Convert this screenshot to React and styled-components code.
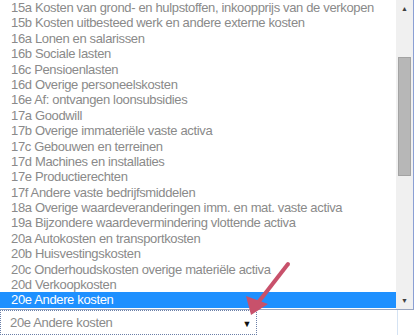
import React from "react";
import styled, { createGlobalStyle } from "styled-components";

const GlobalStyle = createGlobalStyle`
  html, body {
    margin: 0;
    padding: 0;
    background: #ffffff;
    font-family: "Liberation Sans", Arial, sans-serif;
  }
`;

const items = [
  "15a Kosten van grond- en hulpstoffen, inkoopprijs van de verkopen",
  "15b Kosten uitbesteed werk en andere externe kosten",
  "16a Lonen en salarissen",
  "16b Sociale lasten",
  "16c Pensioenlasten",
  "16d Overige personeelskosten",
  "16e Af: ontvangen loonsubsidies",
  "17a Goodwill",
  "17b Overige immateriële vaste activa",
  "17c Gebouwen en terreinen",
  "17d Machines en installaties",
  "17e Productierechten",
  "17f Andere vaste bedrijfsmiddelen",
  "18a Overige waardeveranderingen imm. en mat. vaste activa",
  "19a Bijzondere waardevermindering vlottende activa",
  "20a Autokosten en transportkosten",
  "20b Huisvestingskosten",
  "20c Onderhoudskosten overige materiële activa",
  "20d Verkoopkosten",
  "20e Andere kosten",
];

const Page = styled.div`
  width: 415px;
  height: 335px;
  overflow: hidden;
  position: relative;
`;

const ListBox = styled.div`
  display: flex;
  width: 413px;
  height: 309px;
  border-right: 1px solid #8a9fd4;
  border-bottom: 1px solid #9aa6bf;
`;

const Options = styled.div`
  flex: 1;
  overflow: hidden;
`;

const Option = styled.div`
  height: 15.4px;
  line-height: 15.4px;
  padding-left: 11px;
  font-size: 13px;
  letter-spacing: -0.35px;
  white-space: nowrap;
  color: ${(p) => (p.$selected ? "#ffffff" : "#8a8a8a")};
  background: ${(p) => (p.$selected ? "#1e90ff" : "transparent")};
`;

const ScrollBar = styled.div`
  width: 17px;
  background: #f0f0f0;
  display: flex;
  flex-direction: column;
  align-items: center;
`;

const ScrollButton = styled.div`
  height: 17px;
  width: 17px;
  display: flex;
  align-items: center;
  justify-content: center;
  color: #404040;
  font-size: 7px;
  line-height: 1;
`;

const Track = styled.div`
  flex: 1;
  width: 100%;
  padding-top: 40px;
`;

const Thumb = styled.div`
  margin-left: 2px;
  width: 11px;
  height: 117px;
  background: #b7b7b7;
  border: 1px solid #a3a3a3;
`;

const Bottom = styled.div`
  display: flex;
  height: 25px;
`;

const Select = styled.div`
  width: 257px;
  box-sizing: border-box;
  border: 1px dotted #6a7fa8;
  display: flex;
  align-items: center;
  justify-content: space-between;
  padding: 0 5px 0 9px;
  font-size: 13px;
  letter-spacing: -0.35px;
  color: #8a8a8a;
`;

const Caret = styled.span`
  font-size: 9px;
  color: #111;
  margin-top: 2px;
`;

const Gutter = styled.div`
  width: 140px;
  border-right: 1px solid #d5e3f3;
`;

const Pointer = styled.svg`
  position: absolute;
  left: 240px;
  top: 258px;
  pointer-events: none;
`;

export default function App() {
  return (
    <>
      <GlobalStyle />
      <Page>
        <ListBox>
          <Options>
            {items.map((t, i) => (
              <Option key={t} $selected={i === items.length - 1}>
                {t}
              </Option>
            ))}
          </Options>
          <ScrollBar>
            <ScrollButton>▲</ScrollButton>
            <Track>
              <Thumb />
            </Track>
            <ScrollButton>▼</ScrollButton>
          </ScrollBar>
        </ListBox>
        <Bottom>
          <Select>
            <span>20e Andere kosten</span>
            <Caret>▼</Caret>
          </Select>
          <Gutter />
        </Bottom>
        <Pointer width="60" height="64" viewBox="0 0 60 64">
          <line
            x1="48"
            y1="6"
            x2="17"
            y2="46"
            stroke="#c8516b"
            strokeWidth="4"
            strokeLinecap="round"
          />
          <polygon points="11,57 6,38 28,46" fill="#c8516b" />
        </Pointer>
      </Page>
    </>
  );
}
